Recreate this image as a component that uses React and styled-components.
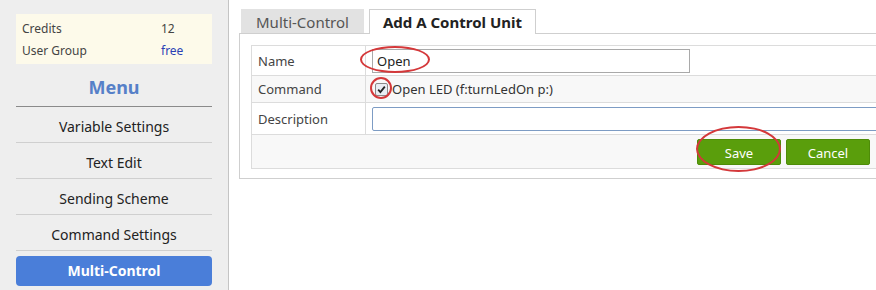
import styled, { createGlobalStyle } from "styled-components";

const GlobalStyle = createGlobalStyle`
  body {
    margin: 0;
    background: #ffffff;
    font-family: "Noto Sans", "Open Sans", Arial, sans-serif;
    color: #333;
  }
`;

const Page = styled.div`
  display: flex;
  height: 290px;
  overflow: hidden;
`;

const Sidebar = styled.aside`
  width: 229px;
  flex-shrink: 0;
  background: #eeeeee;
  border-right: 1px solid #c4c4c4;
  padding: 14px 16px 0;
  box-sizing: border-box;
`;

const InfoBox = styled.div`
  background: #fdfaea;
  padding: 4px 6px 2px;
`;

const InfoRow = styled.div`
  display: grid;
  grid-template-columns: 139px auto;
  font-size: 12px;
  line-height: 22px;
  color: #444;
`;

const InfoValue = styled.span`
  color: ${(p) => (p.$link ? "#2b3fb5" : "#444")};
`;

const MenuTitle = styled.div`
  text-align: center;
  font-size: 18px;
  font-weight: bold;
  color: #5680c8;
  line-height: 24px;
  padding: 11px 0 7px;
  border-bottom: 1px solid #8a8a8a;
`;

const MenuItem = styled.div`
  text-align: center;
  font-size: 14px;
  color: #222;
  height: 30px;
  padding-top: 5px;
  line-height: 30px;
  border-bottom: 1px solid #cfcfcf;
`;

const ActiveItem = styled.div`
  margin-top: 5px;
  height: 30px;
  line-height: 30px;
  text-align: center;
  background: #4a7ed9;
  border-radius: 4px;
  color: #fff;
  font-weight: bold;
  font-size: 14px;
`;

const Main = styled.main`
  flex: 1;
  padding: 9px 0 0 10px;
  min-width: 0;
`;

const Tabs = styled.div`
  display: flex;
  align-items: flex-end;
  gap: 5px;
  padding-left: 2px;
  height: 24px;
`;

const Tab = styled.div`
  height: ${(p) => (p.$active ? "25px" : "24px")};
  line-height: 24px;
  padding: 0 ${(p) => (p.$active ? "13px" : "14px")};
  box-sizing: border-box;
  font-size: 15px;
  background: ${(p) => (p.$active ? "#fff" : "#e2e2e2")};
  border: 1px solid ${(p) => (p.$active ? "#cfcfcf" : "#e2e2e2")};
  border-bottom: none;
  font-weight: ${(p) => (p.$active ? "bold" : "normal")};
  color: ${(p) => (p.$active ? "#222" : "#555")};
  margin-bottom: ${(p) => (p.$active ? "-1px" : "0")};
  position: relative;
  z-index: 1;
`;

const Panel = styled.div`
  border: 1px solid #cfcfcf;
  border-right: none;
  height: 146px;
  box-sizing: border-box;
  padding: 11px 0 0 11px;
`;

const Table = styled.div`
  border: 1px solid #dcdcdc;
  border-right: none;
  position: relative;
`;

const Row = styled.div`
  display: grid;
  grid-template-columns: 114px 1fr;
  height: ${(p) => p.$h}px;
  background: ${(p) => (p.$shade ? "#f8f8f8" : "#fff")};
  border-bottom: ${(p) => (p.$last ? "none" : "1px solid #dcdcdc")};
`;

const Label = styled.div`
  font-size: 13px;
  color: #444;
  padding-left: 6px;
  display: flex;
  align-items: center;
  border-right: ${(p) => (p.$plain ? "none" : "1px solid #dcdcdc")};
`;

const Cell = styled.div`
  display: flex;
  align-items: center;
  padding-left: 6px;
  font-size: 13px;
  color: #333;
  overflow: hidden;
`;

const TextInput = styled.div`
  width: ${(p) => (p.$wide ? "560px" : "318px")};
  flex-shrink: 0;
  height: 24px;
  box-sizing: border-box;
  border: 1px solid ${(p) => (p.$wide ? "#7d9cc4" : "#a9a9a9")};
  border-radius: ${(p) => (p.$wide ? "2px" : "0")};
  padding-left: 4px;
  line-height: 22px;
  font-size: 13px;
  color: #222;
`;

const Check = styled.span`
  width: 11px;
  height: 11px;
  border: 1px solid #8a8a8a;
  border-radius: 2px;
  background: #e9edf3;
  display: inline-flex;
  align-items: center;
  justify-content: center;
  margin: 0 4px 0 3px;
`;

const ButtonBar = styled.div`
  display: flex;
  justify-content: flex-end;
  align-items: center;
  gap: 5px;
  padding-right: 6px;
  height: 100%;
`;

const Button = styled.div`
  width: 84px;
  height: 26px;
  line-height: 26px;
  text-align: center;
  background: #5a9e0c;
  border: 1px solid #4e8c08;
  box-sizing: border-box;
  border-radius: 2px;
  color: #fff;
  font-size: 13px;
`;

const Mark = styled.div`
  position: absolute;
  left: ${(p) => p.$x}px;
  top: ${(p) => p.$y}px;
  width: ${(p) => p.$w}px;
  height: ${(p) => p.$h}px;
  border: 2px solid #d4383a;
  border-radius: 50%;
  box-sizing: border-box;
  pointer-events: none;
`;

export default function App() {
  return (
    <>
      <GlobalStyle />
      <Page>
        <Sidebar>
          <InfoBox>
            <InfoRow>
              <span>Credits</span>
              <InfoValue>12</InfoValue>
            </InfoRow>
            <InfoRow>
              <span>User Group</span>
              <InfoValue $link>free</InfoValue>
            </InfoRow>
          </InfoBox>
          <MenuTitle>Menu</MenuTitle>
          <MenuItem>Variable Settings</MenuItem>
          <MenuItem>Text Edit</MenuItem>
          <MenuItem>Sending Scheme</MenuItem>
          <MenuItem>Command Settings</MenuItem>
          <ActiveItem>Multi-Control</ActiveItem>
        </Sidebar>
        <Main>
          <Tabs>
            <Tab>Multi-Control</Tab>
            <Tab $active>Add A Control Unit</Tab>
          </Tabs>
          <Panel>
            <Table>
              <Row $h={29}>
                <Label>Name</Label>
                <Cell>
                  <TextInput>Open</TextInput>
                </Cell>
              </Row>
              <Row $h={26} $shade>
                <Label>Command</Label>
                <Cell>
                  <Check>
                    <svg width="9" height="9" viewBox="0 0 9 9">
                      <path d="M1.2 4.6 L3.4 7 L7.8 1.6" fill="none" stroke="#222" strokeWidth="1.8" />
                    </svg>
                  </Check>
                  Open LED (f:turnLedOn p:)
                </Cell>
              </Row>
              <Row $h={31}>
                <Label>Description</Label>
                <Cell>
                  <TextInput $wide />
                </Cell>
              </Row>
              <Row $h={33} $shade $last>
                <Label $plain />
                <ButtonBar>
                  <Button>Save</Button>
                  <Button>Cancel</Button>
                </ButtonBar>
              </Row>
              <Mark $x={108} $y={0} $w={70} $h={27} />
              <Mark $x={118} $y={31} $w={22} $h={22} />
              <Mark $x={444} $y={80} $w={85} $h={46} />
            </Table>
          </Panel>
        </Main>
      </Page>
    </>
  );
}
